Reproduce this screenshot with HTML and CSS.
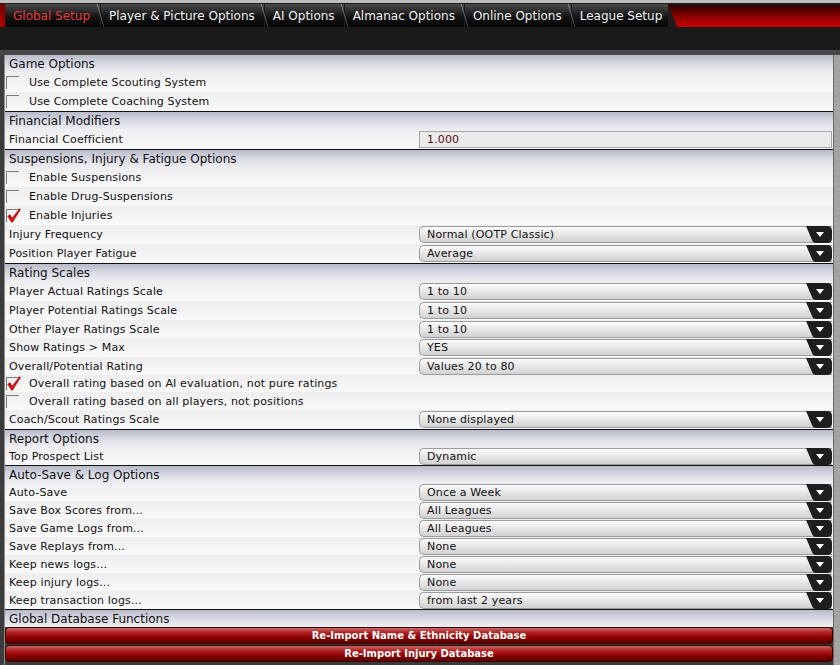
FILE: index.html
```html
<!DOCTYPE html>
<html lang="en">
<head>
    <meta charset="UTF-8">
    <title>Global Setup</title>
    <link rel="stylesheet" href="styles.css">
</head>
<body>
    <div class="tabbar">
        <div class="tab-edge"></div>
        <div class="tab active first">Global Setup</div><span class="sep"></span>
        <div class="tab">Player &amp; Picture Options</div><span class="sep"></span>
        <div class="tab">AI Options</div><span class="sep"></span>
        <div class="tab">Almanac Options</div><span class="sep"></span>
        <div class="tab">Online Options</div><span class="sep"></span>
        <div class="tab last">League Setup</div>
        <div class="tab-fill"></div>
    </div>
    <div class="subbar"></div>

    <div class="main">
        <div class="edge-left"></div>
        <div class="panel">

            <div class="group">
                <div class="hdr">Game Options</div>
                <div class="row"><span class="cb"></span><span class="label">Use Complete Scouting System</span></div>
                <div class="row"><span class="cb"></span><span class="label">Use Complete Coaching System</span></div>
            </div>

            <div class="group">
                <div class="hdr">Financial Modifiers</div>
                <div class="row">
                    <span class="label plain">Financial Coefficient</span>
                    <div class="field">1.000</div>
                </div>
            </div>

            <div class="group">
                <div class="hdr">Suspensions, Injury &amp; Fatigue Options</div>
                <div class="row"><span class="cb"></span><span class="label">Enable Suspensions</span></div>
                <div class="row"><span class="cb"></span><span class="label">Enable Drug-Suspensions</span></div>
                <div class="row"><span class="cb on"><svg viewBox="0 0 14 15"><path d="M0.5 8.2 L3 6.6 L5.2 10 L12.6 0.6 L13.6 1.6 L5.6 14.2 L4.4 14.2 Z"/></svg></span><span class="label">Enable Injuries</span></div>
                <div class="row">
                    <span class="label plain">Injury Frequency</span>
                    <div class="select"><span>Normal (OOTP Classic)</span><svg viewBox="0 0 26 17"><path class="tab-shape" d="M0 0 H21 Q26 0 26 5 V12 Q26 17 21 17 H10 Q7 17 6 14 Z"/><path class="tri" d="M10 6 H18 L14 11 Z"/></svg></div>
                </div>
                <div class="row">
                    <span class="label plain">Position Player Fatigue</span>
                    <div class="select"><span>Average</span><svg viewBox="0 0 26 17"><path class="tab-shape" d="M0 0 H21 Q26 0 26 5 V12 Q26 17 21 17 H10 Q7 17 6 14 Z"/><path class="tri" d="M10 6 H18 L14 11 Z"/></svg></div>
                </div>
            </div>

            <div class="group">
                <div class="hdr">Rating Scales</div>
                <div class="row">
                    <span class="label plain">Player Actual Ratings Scale</span>
                    <div class="select"><span>1 to 10</span><svg viewBox="0 0 26 17"><path class="tab-shape" d="M0 0 H21 Q26 0 26 5 V12 Q26 17 21 17 H10 Q7 17 6 14 Z"/><path class="tri" d="M10 6 H18 L14 11 Z"/></svg></div>
                </div>
                <div class="row">
                    <span class="label plain">Player Potential Ratings Scale</span>
                    <div class="select"><span>1 to 10</span><svg viewBox="0 0 26 17"><path class="tab-shape" d="M0 0 H21 Q26 0 26 5 V12 Q26 17 21 17 H10 Q7 17 6 14 Z"/><path class="tri" d="M10 6 H18 L14 11 Z"/></svg></div>
                </div>
                <div class="row sm">
                    <span class="label plain">Other Player Ratings Scale</span>
                    <div class="select"><span>1 to 10</span><svg viewBox="0 0 26 17"><path class="tab-shape" d="M0 0 H21 Q26 0 26 5 V12 Q26 17 21 17 H10 Q7 17 6 14 Z"/><path class="tri" d="M10 6 H18 L14 11 Z"/></svg></div>
                </div>
                <div class="row">
                    <span class="label plain">Show Ratings &gt; Max</span>
                    <div class="select"><span>YES</span><svg viewBox="0 0 26 17"><path class="tab-shape" d="M0 0 H21 Q26 0 26 5 V12 Q26 17 21 17 H10 Q7 17 6 14 Z"/><path class="tri" d="M10 6 H18 L14 11 Z"/></svg></div>
                </div>
                <div class="row sm">
                    <span class="label plain">Overall/Potential Rating</span>
                    <div class="select"><span>Values 20 to 80</span><svg viewBox="0 0 26 17"><path class="tab-shape" d="M0 0 H21 Q26 0 26 5 V12 Q26 17 21 17 H10 Q7 17 6 14 Z"/><path class="tri" d="M10 6 H18 L14 11 Z"/></svg></div>
                </div>
                <div class="row xs"><span class="cb on"><svg viewBox="0 0 14 15"><path d="M0.5 8.2 L3 6.6 L5.2 10 L12.6 0.6 L13.6 1.6 L5.6 14.2 L4.4 14.2 Z"/></svg></span><span class="label">Overall rating based on AI evaluation, not pure ratings</span></div>
                <div class="row sm"><span class="cb"></span><span class="label">Overall rating based on all players, not positions</span></div>
                <div class="row">
                    <span class="label plain">Coach/Scout Ratings Scale</span>
                    <div class="select"><span>None displayed</span><svg viewBox="0 0 26 17"><path class="tab-shape" d="M0 0 H21 Q26 0 26 5 V12 Q26 17 21 17 H10 Q7 17 6 14 Z"/><path class="tri" d="M10 6 H18 L14 11 Z"/></svg></div>
                </div>
            </div>

            <div class="group">
                <div class="hdr sm">Report Options</div>
                <div class="row sm">
                    <span class="label plain">Top Prospect List</span>
                    <div class="select"><span>Dynamic</span><svg viewBox="0 0 26 17"><path class="tab-shape" d="M0 0 H21 Q26 0 26 5 V12 Q26 17 21 17 H10 Q7 17 6 14 Z"/><path class="tri" d="M10 6 H18 L14 11 Z"/></svg></div>
                </div>
            </div>

            <div class="group">
                <div class="hdr sm">Auto-Save &amp; Log Options</div>
                <div class="row sm">
                    <span class="label plain">Auto-Save</span>
                    <div class="select"><span>Once a Week</span><svg viewBox="0 0 26 17"><path class="tab-shape" d="M0 0 H21 Q26 0 26 5 V12 Q26 17 21 17 H10 Q7 17 6 14 Z"/><path class="tri" d="M10 6 H18 L14 11 Z"/></svg></div>
                </div>
                <div class="row sm">
                    <span class="label plain">Save Box Scores from...</span>
                    <div class="select"><span>All Leagues</span><svg viewBox="0 0 26 17"><path class="tab-shape" d="M0 0 H21 Q26 0 26 5 V12 Q26 17 21 17 H10 Q7 17 6 14 Z"/><path class="tri" d="M10 6 H18 L14 11 Z"/></svg></div>
                </div>
                <div class="row sm">
                    <span class="label plain">Save Game Logs from...</span>
                    <div class="select"><span>All Leagues</span><svg viewBox="0 0 26 17"><path class="tab-shape" d="M0 0 H21 Q26 0 26 5 V12 Q26 17 21 17 H10 Q7 17 6 14 Z"/><path class="tri" d="M10 6 H18 L14 11 Z"/></svg></div>
                </div>
                <div class="row sm">
                    <span class="label plain">Save Replays from...</span>
                    <div class="select"><span>None</span><svg viewBox="0 0 26 17"><path class="tab-shape" d="M0 0 H21 Q26 0 26 5 V12 Q26 17 21 17 H10 Q7 17 6 14 Z"/><path class="tri" d="M10 6 H18 L14 11 Z"/></svg></div>
                </div>
                <div class="row sm">
                    <span class="label plain">Keep news logs...</span>
                    <div class="select"><span>None</span><svg viewBox="0 0 26 17"><path class="tab-shape" d="M0 0 H21 Q26 0 26 5 V12 Q26 17 21 17 H10 Q7 17 6 14 Z"/><path class="tri" d="M10 6 H18 L14 11 Z"/></svg></div>
                </div>
                <div class="row sm">
                    <span class="label plain">Keep injury logs...</span>
                    <div class="select"><span>None</span><svg viewBox="0 0 26 17"><path class="tab-shape" d="M0 0 H21 Q26 0 26 5 V12 Q26 17 21 17 H10 Q7 17 6 14 Z"/><path class="tri" d="M10 6 H18 L14 11 Z"/></svg></div>
                </div>
                <div class="row sm">
                    <span class="label plain">Keep transaction logs...</span>
                    <div class="select"><span>from last 2 years</span><svg viewBox="0 0 26 17"><path class="tab-shape" d="M0 0 H21 Q26 0 26 5 V12 Q26 17 21 17 H10 Q7 17 6 14 Z"/><path class="tri" d="M10 6 H18 L14 11 Z"/></svg></div>
                </div>
            </div>

            <div class="group">
                <div class="hdr sm">Global Database Functions</div>
                <div class="btns">
                    <button class="btn">Re-Import Name &amp; Ethnicity Database</button>
                    <button class="btn">Re-Import Injury Database</button>
                </div>
            </div>

        </div>
        <div class="scroll"></div>
    </div>
</body>
</html>
```

FILE: styles.css
```css
body {
    margin: 0;
    width: 840px;
    height: 665px;
    overflow: hidden;
    background: #1a1a1a;
    font-family: "DejaVu Sans", Verdana, sans-serif;
    color: #111;
}

/* top tab strip */
.tabbar {
    display: flex;
    align-items: stretch;
    height: 23px;
    padding-top: 4px;
    background: linear-gradient(#bdbdbd 0, #bdbdbd 3px, #1c1c1c 3px);
}
.tab-edge {
    width: 5px;
    background: linear-gradient(#7a0000, #b00000);
}
.tab {
    display: flex;
    align-items: center;
    padding: 0 9px 0 8px;
    font-size: 12px;
    color: #f2f2f2;
    background: linear-gradient(#4a4a4a, #141414 55%, #050505);
    white-space: nowrap;
}
.tab.first {
    padding-right: 10px;
}
.tab.last {
    padding-right: 6px;
}
.tab.active {
    color: #e23a3a;
}
.sep {
    width: 1px;
    background: linear-gradient(#8a8a8a, #3a3a3a);
    transform: skewX(16deg);
}
.tab-fill {
    flex: 1;
    margin-top: 1px;
    background: linear-gradient(#2a0000, #8a0000 50%, #c80000);
    clip-path: polygon(0 0, 100% 0, 100% 100%, 9px 100%);
}
.subbar {
    height: 23px;
    background: #1a1a1a;
    border-bottom: 5px solid #484848;
}

/* content */
.main {
    display: flex;
    height: 610px;
}
.edge-left {
    width: 4px;
    background: #3c3c3c;
    border-right: 1px solid #8c8c8c;
}
.panel {
    width: 828px;
    background: #3a3a3a;
}
.scroll {
    width: 6px;
    border-left: 1px solid #6a6a6a;
    background: repeating-linear-gradient(#a6a6a6 0, #9c9c9c 2px, #ababab 3px, #a0a0a0 5px);
}

.group + .group {
    border-top: 1px solid #111;
}
.hdr {
    height: 18px;
    line-height: 19px;
    padding-left: 4px;
    font-size: 12px;
    background: linear-gradient(#b7bac9, #dcdde6 55%, #eeeef3);
}
.hdr.sm {
    height: 17px;
    line-height: 18px;
}
.row {
    display: flex;
    align-items: center;
    height: 19px;
    font-size: 11px;
    letter-spacing: 0.15px;
    background: linear-gradient(#eeeeee, #f9f9f9);
}
.row.sm {
    height: 18px;
}
.row.xs {
    height: 17px;
}
.label {
    flex: 1;
    white-space: nowrap;
}
.label.plain {
    padding-left: 4px;
}

.cb {
    display: flex;
    width: 12px;
    height: 12px;
    margin: 0 10px 0 1px;
    border-top: 1px solid #7c7c7c;
    border-left: 1px solid #7c7c7c;
}
.cb svg {
    width: 14px;
    height: 15px;
    margin: -2px 0 0 0;
    overflow: visible;
}
.cb svg path {
    fill: #d41414;
    stroke: #7a0000;
    stroke-width: 0.4;
}

.select {
    display: flex;
    align-items: center;
    box-sizing: border-box;
    width: 413px;
    height: 17px;
    margin-right: 1px;
    border: 1px solid #9c9c9c;
    border-right: 0;
    border-radius: 5px 0 0 5px;
    background: linear-gradient(#fbfbfb, #e6e6e6 50%, #d2d2d2);
}
.select span {
    flex: 1;
    padding-left: 7px;
}
.select svg {
    width: 26px;
    height: 17px;
    margin: -1px 0;
}
.tab-shape {
    fill: #1e1e1e;
}
.tri {
    fill: #fff;
}

.field {
    box-sizing: border-box;
    width: 413px;
    height: 17px;
    margin-right: 1px;
    padding-left: 7px;
    line-height: 15px;
    border: 1px solid #a6a6a6;
    background: #ebebeb;
    color: #5c0a0a;
}

.btns {
    display: flex;
    flex-direction: column;
    gap: 1px;
    background: #3a3a3a;
}
.btn {
    height: 17px;
    padding: 0;
    border: 1px solid #3a0000;
    border-radius: 4px;
    background: linear-gradient(#c86a6a, #b22222 30%, #8c0000 65%, #5a0000);
    color: #fff;
    font-family: "DejaVu Sans", Verdana, sans-serif;
    font-size: 10px;
    font-weight: bold;
    text-align: center;
}
```
